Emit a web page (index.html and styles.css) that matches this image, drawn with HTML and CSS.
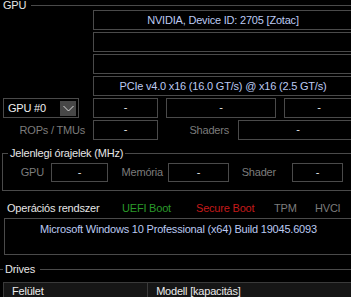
FILE: index.html
```html
<!DOCTYPE html>
<html>
<head>
<meta charset="utf-8">
<link rel="stylesheet" href="styles.css">
</head>
<body>
<div class="page">
  <div class="gtitle gpu-title"><span class="gtext">GPU</span><span class="gline"></span></div>
  <div class="vbox val">NVIDIA, Device ID: 2705 [Zotac]</div>
  <div class="vbox val"></div>
  <div class="vbox val"></div>
  <div class="vbox val">PCIe v4.0 x16 (16.0 GT/s) @ x16 (2.5 GT/s)</div>

  <div class="row r5">
    <div class="combo">
      <span class="combo-text">GPU #0</span>
      <span class="combo-btn"><svg width="11" height="7" viewBox="0 0 11 7"><path d="M0.5 1 L5.5 6 L10.5 1" fill="none" stroke="#d8d8d8" stroke-width="1"/></svg></span>
    </div>
    <div class="box w65 first">-</div>
    <div class="box w110 gap8">-</div>
    <div class="box w70 gap8">-</div>
  </div>

  <div class="row r6">
    <div class="lab l93">ROPs / TMUs</div>
    <div class="box w65">-</div>
    <div class="lab l80">Shaders</div>
    <div class="box w120">-</div>
  </div>

  <fieldset class="clocks">
    <legend>Jelenlegi órajelek (MHz)</legend>
    <div class="row crow">
      <div class="lab c1">GPU</div>
      <div class="box w57">-</div>
      <div class="lab c2">Memória</div>
      <div class="box w61">-</div>
      <div class="lab c3">Shader</div>
      <div class="box w51">-</div>
    </div>
  </fieldset>

  <div class="os-row">
    <span class="os-lab">Operációs rendszer</span>
    <span class="flag green">UEFI Boot</span>
    <span class="flag red">Secure Boot</span>
    <span class="flag gray tpm">TPM</span>
    <span class="flag gray hvci">HVCI</span>
  </div>
  <div class="os-box val">Microsoft Windows 10 Professional (x64) Build 19045.6093</div>

  <div class="gtitle drives-title"><span class="gline stub"></span><span class="gtext">Drives</span><span class="gline"></span></div>
  <div class="thead">
    <div class="th th1">Felület</div>
    <div class="th th2">Modell [kapacitás]</div>
  </div>
</div>
</body>
</html>
```

FILE: styles.css
```css
html, body {
  margin: 0;
  padding: 0;
  background: #000;
  overflow: hidden;
}
body {
  font-family: "Liberation Sans", Arial, sans-serif;
  font-size: 11px;
  letter-spacing: -0.2px;
  color: #e6e6e6;
}
.page {
  width: 440px;
}
.gtitle {
  display: flex;
  align-items: center;
  line-height: 12px;
}
.gpu-title {
  height: 10px;
  padding-left: 3px;
}
.gtext {
  white-space: nowrap;
}
.gline {
  flex: 1;
  height: 0;
  border-top: 1px solid #4a4a4a;
  margin-left: 5px;
}
.gline.stub {
  flex: 0 0 3px;
  margin-left: 0;
  margin-right: 2px;
}
.val {
  color: #bccaf2;
}
.vbox {
  margin-left: 93px;
  height: 20px;
  box-sizing: border-box;
  border: 1px solid #4a4a4a;
  margin-bottom: 2px;
  line-height: 18px;
  text-align: center;
  width: 330px;
  padding-right: 70px;
}
.row {
  display: flex;
  height: 20px;
}
.r5 {
  margin-bottom: 2px;
}
.box {
  box-sizing: border-box;
  border: 1px solid #4a4a4a;
  height: 100%;
  text-align: center;
  line-height: 17px;
  color: #e8e8e8;
  flex: none;
}
.w65 { width: 65px; }
.w110 { width: 110px; }
.w70 { width: 70px; }
.w120 { width: 120px; }
.w57 { width: 57px; }
.w61 { width: 61px; }
.w51 { width: 51px; }
.first { margin-left: 14px; }
.gap8 { margin-left: 8px; }
.combo {
  margin-left: 3px;
  width: 76px;
  height: 20px;
  box-sizing: border-box;
  border: 1px solid #4a4a4a;
  display: flex;
  align-items: center;
  justify-content: space-between;
  padding: 0 2px 0 4px;
  flex: none;
  color: #f0f0f0;
}
.combo-btn {
  width: 16px;
  height: 15px;
  background: #474747;
  display: flex;
  align-items: center;
  justify-content: center;
}
.lab {
  color: #7c7c7c;
  text-align: right;
  line-height: 20px;
  box-sizing: border-box;
  flex: none;
  white-space: nowrap;
}
.l93 { width: 93px; padding-right: 8px; }
.l80 { width: 80px; padding-right: 9px; }

.clocks {
  margin: 7px 0 0 2px;
  padding: 4px 0 8px 0;
  border: 1px solid #4a4a4a;
  border-right: none;
  min-width: 0;
}
.clocks legend {
  padding: 0 2px;
  margin-left: 5px;
  line-height: 12px;
  color: #e6e6e6;
}
.crow {
  height: 19px;
}
.crow .lab { line-height: 19px; }
.crow .box { line-height: 16px; }
.c1 { width: 48px; padding-right: 7px; }
.c2 { width: 60px; padding-right: 5px; }
.c3 { width: 63px; padding-right: 16px; }

.os-row {
  display: flex;
  height: 14px;
  line-height: 14px;
  margin-top: 10px;
  padding-left: 7px;
  white-space: nowrap;
}
.os-lab { width: 115px; flex: none; }
.flag { flex: none; }
.green { color: #2a9a2a; width: 74px; }
.red { color: #c41a1a; width: 78px; }
.gray { color: #7c7c7c; }
.tpm { width: 41px; }
.os-box {
  margin: 3px 0 0 4px;
  height: 37px;
  box-sizing: border-box;
  border: 1px solid #4a4a4a;
  border-right: none;
  line-height: 18px;
  padding-top: 1px;
  text-align: center;
  width: 420px;
  padding-right: 72px;
}
.drives-title {
  margin-top: 8px;
  height: 12px;
}
.thead {
  display: flex;
  margin: 7px 0 0 3px;
  height: 18px;
}
.th {
  box-sizing: border-box;
  background: #161616;
  border: 1px solid #3a3a3a;
  line-height: 16px;
  padding-left: 8px;
  color: #ececec;
}
.th1 { width: 149px; }
.th2 { width: 300px; border-left: none; }
```
